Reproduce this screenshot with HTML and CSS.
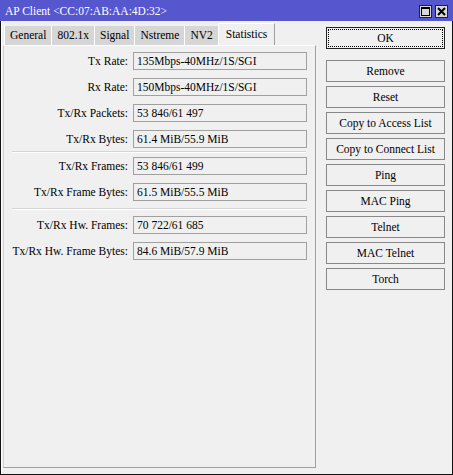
FILE: index.html
```html
<!DOCTYPE html>
<html lang="en">

<head>
    <meta charset="UTF-8">
    <meta name="viewport" content="width=device-width, initial-scale=1.0">
    <title>AP Client</title>
    <link rel="stylesheet" href="styles.css">
</head>

<body>
    <div class="janela">
        <div class="titulo">
            <span class="titulo-texto">AP Client &lt;CC:07:AB:AA:4D:32&gt;</span>
            <div class="titulo-botoes">
                <span class="tbtn">
                    <svg width="11" height="11" viewBox="0 0 11 11">
                        <rect x="1.5" y="1.5" width="8" height="8" fill="none" stroke="#000" stroke-width="1"/>
                        <rect x="1" y="1" width="9" height="2" fill="#000"/>
                    </svg>
                </span>
                <span class="tbtn">
                    <svg width="11" height="11" viewBox="0 0 11 11">
                        <path d="M2 2 L9 9 M9 2 L2 9" stroke="#000" stroke-width="2"/>
                    </svg>
                </span>
            </div>
        </div>

        <div class="conteudo">
            <div class="esquerda">
                <div class="abas">
                    <span class="aba">General</span>
                    <span class="aba">802.1x</span>
                    <span class="aba">Signal</span>
                    <span class="aba">Nstreme</span>
                    <span class="aba">NV2</span>
                    <span class="aba ativa">Statistics</span>
                </div>
                <div class="painel">
                    <div class="linha"><span class="rotulo">Tx Rate:</span><span class="valor">135Mbps-40MHz/1S/SGI</span></div>
                    <div class="linha"><span class="rotulo">Rx Rate:</span><span class="valor">150Mbps-40MHz/1S/SGI</span></div>
                    <div class="linha"><span class="rotulo">Tx/Rx Packets:</span><span class="valor">53 846/61 497</span></div>
                    <div class="linha"><span class="rotulo">Tx/Rx Bytes:</span><span class="valor">61.4 MiB/55.9 MiB</span></div>
                    <div class="separador sep1"></div>
                    <div class="linha"><span class="rotulo">Tx/Rx Frames:</span><span class="valor">53 846/61 499</span></div>
                    <div class="linha"><span class="rotulo">Tx/Rx Frame Bytes:</span><span class="valor">61.5 MiB/55.5 MiB</span></div>
                    <div class="separador sep2"></div>
                    <div class="linha"><span class="rotulo">Tx/Rx Hw. Frames:</span><span class="valor">70 722/61 685</span></div>
                    <div class="linha"><span class="rotulo">Tx/Rx Hw. Frame Bytes:</span><span class="valor">84.6 MiB/57.9 MiB</span></div>
                </div>
            </div>

            <div class="botoes">
                <button class="ok">OK</button>
                <button class="primeiro">Remove</button>
                <button>Reset</button>
                <button>Copy to Access List</button>
                <button>Copy to Connect List</button>
                <button>Ping</button>
                <button>MAC Ping</button>
                <button>Telnet</button>
                <button>MAC Telnet</button>
                <button>Torch</button>
            </div>
        </div>
    </div>
</body>

</html>
```

FILE: styles.css
```css
html,
body {
    margin: 0;
    font-family: 'Liberation Serif', 'Times New Roman', serif;
    font-size: 11.5px;
    background-color: #f0f0f0;
}

.janela {
    width: 453px;
    height: 475px;
    box-sizing: border-box;
    border: 1px solid #111;
    border-top: none;
    background-color: #f0f0f0;
    box-shadow: inset 1px 0 0 #fff;
    display: flex;
    flex-direction: column;
}

.titulo {
    height: 21px;
    background-color: #5656cf;
    color: white;
    display: flex;
    align-items: center;
    justify-content: space-between;
    padding: 0 5px 0 5px;
    margin: 0 -1px;
}

.titulo-botoes {
    display: flex;
    gap: 3px;
    padding-top: 2px;
}

.tbtn {
    width: 13px;
    height: 13px;
    box-sizing: border-box;
    border: 1px solid #222;
    background-color: #d8d8d8;
    display: flex;
    align-items: center;
    justify-content: center;
}

.conteudo {
    flex: 1;
    display: flex;
    padding: 2px 0 0 2px;
}

.esquerda {
    width: 313px;
    display: flex;
    flex-direction: column;
}

.abas {
    height: 22px;
    display: flex;
    align-items: flex-end;
    padding-left: 1px;
}

.aba {
    height: 19px;
    line-height: 19px;
    padding: 0 5px;
    background-color: #d6d6d6;
    border-left: 1px solid #fff;
    white-space: nowrap;
}

.aba.ativa {
    height: 22px;
    line-height: 20px;
    box-sizing: border-box;
    background-color: #f0f0f0;
    border-top: 1px solid #fff;
    border-right: 1px solid #a0a0a0;
    padding: 0 7px;
}

.painel {
    height: 423px;
    box-sizing: border-box;
    border-left: 1px solid #d0d0d0;
    border-right: 1px solid #a0a0a0;
    border-bottom: 1px solid #a0a0a0;
    border-top: 1px solid #fff;
    padding-top: 6px;
    display: flex;
    flex-direction: column;
    gap: 8px;
}

.linha {
    display: flex;
    align-items: center;
    height: 18px;
}

.rotulo {
    width: 124px;
    text-align: right;
    white-space: nowrap;
}

.valor {
    margin-left: 5px;
    width: 174px;
    height: 18px;
    line-height: 16px;
    box-sizing: border-box;
    border: 1px solid #a0a0a0;
    padding-left: 3px;
    white-space: nowrap;
}

.separador {
    height: 0;
    margin-left: 8px;
    width: 294px;
    border-top: 1px solid #d4d4d4;
    border-bottom: 1px solid #fff;
}

.sep1 {
    margin-top: -5px;
    margin-bottom: -4px;
}

.sep2 {
    margin-top: -1px;
    margin-bottom: -2px;
}

.botoes {
    width: 119px;
    margin-left: 10px;
    padding-top: 4px;
    display: flex;
    flex-direction: column;
    gap: 4px;
}

button {
    font-family: 'Liberation Serif', 'Times New Roman', serif;
    font-size: 11.5px;
    height: 22px;
    padding: 0;
    background-color: #f0f0f0;
    border: 1px solid #888;
    color: #000;
}

.ok {
    border: 1px solid #222;
    outline: 1px dotted #000;
    outline-offset: -3px;
}

.primeiro {
    margin-top: 7px;
}
```
